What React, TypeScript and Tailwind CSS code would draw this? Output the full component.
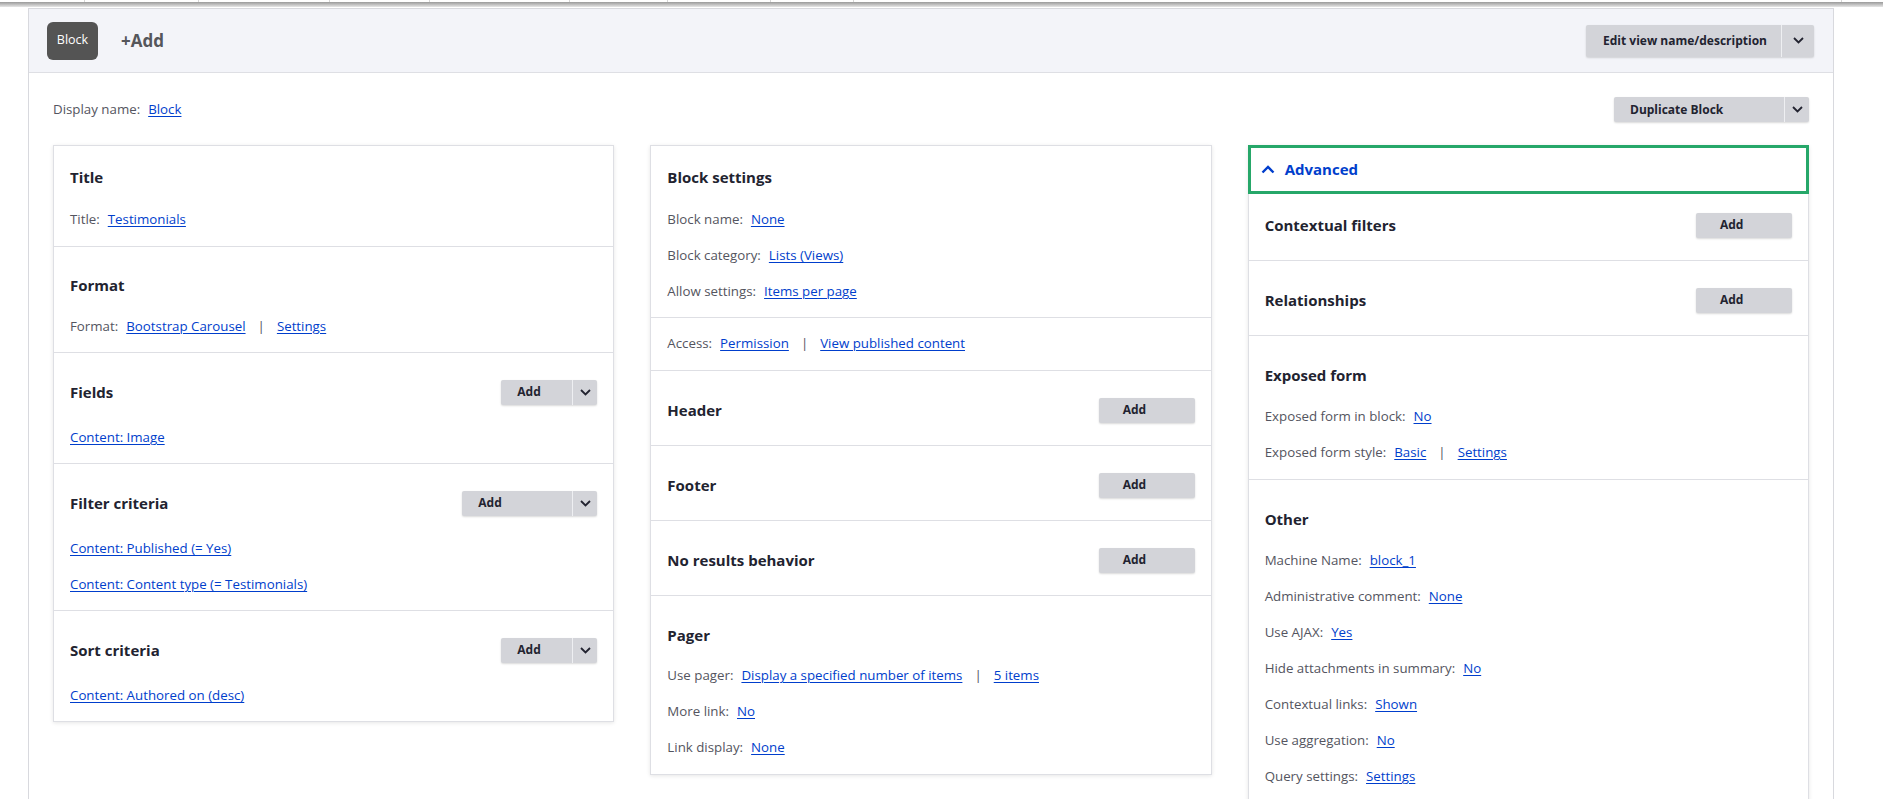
import React from 'react';

const LINK = 'text-[#003ecc] underline underline-offset-2 decoration-1';

const ChevronDown = () => (
  <svg width="11" height="7" viewBox="0 0 11 7" fill="none">
    <path d="M1 1l4.5 4.5L10 1" stroke="#222330" strokeWidth="1.8" />
  </svg>
);

const ChevronUp = () => (
  <svg width="14" height="9" viewBox="0 0 14 9" fill="none">
    <path d="M1.5 7.5L7 2l5.5 5.5" stroke="#003ecc" strokeWidth="2.4" />
  </svg>
);

type DropProps = { label: string; mainClass: string; toggle?: boolean };

const DropButton = ({ label, mainClass, toggle }: DropProps) => (
  <div className="flex h-[25px] items-stretch rounded-[2px] bg-[#d3d4d9] text-[12px] font-bold text-[#222330] shadow-[0_1px_2px_rgba(0,0,0,0.15)]">
    <span className={'flex items-center ' + mainClass}>{label}</span>
    {toggle && (
      <span className="flex w-[25px] items-center justify-center border-l border-[#eeeff2]">
        <ChevronDown />
      </span>
    )}
  </div>
);

type RowProps = { label?: string; links: string[] };

const Row = ({ label, links }: RowProps) => (
  <div className="flex h-[36px] items-center text-[13.3px] text-[#545560]">
    {label && <span className="mr-[8px]">{label}</span>}
    {links.map((link, idx) => (
      <React.Fragment key={idx}>
        {idx > 0 && <span className="mx-[12px]">|</span>}
        <a href="#" className={LINK}>
          {link}
        </a>
      </React.Fragment>
    ))}
  </div>
);

const Heading = ({ children }: { children: React.ReactNode }) => (
  <h3 className="text-[15px] font-bold text-[#222330]">{children}</h3>
);

const TopStrip = () => (
  <div>
    <div className="flex h-[2px]">
      <div className="w-[85px] border-r border-[#d6d6d6]" />
      <div className="w-[114px] border-r border-[#d6d6d6]" />
      <div className="w-[131px] border-r border-[#d6d6d6]" />
      <div className="w-[100px] border-r border-[#d6d6d6]" />
      <div className="w-[140px] border-r border-[#d6d6d6]" />
      <div className="w-[98px] border-r border-[#d6d6d6]" />
      <div className="w-[103px] border-r border-[#d6d6d6]" />
      <div className="w-[83px] border-r border-[#d6d6d6]" />
      <div className="w-[988px] border-r border-[#d6d6d6]" />
    </div>
    <div className="h-[5px] bg-linear-to-b from-[#9a9a9a] to-[#e6e6e6]" />
  </div>
);

export default function App() {
  return (
    <div className="min-h-screen bg-white font-['Open_Sans',sans-serif]">
      <TopStrip />
      <div className="mt-[1px] ml-[28px] w-[1806px] border border-[#d8d9de] bg-white pb-10">
        {/* display tabs */}
        <div className="flex h-[64px] items-center justify-between border-b border-[#dedfe4] bg-[#f3f4f9] pr-[19px] pl-[18px]">
          <div className="flex items-center">
            <button className="flex h-[38px] w-[51px] items-center justify-center rounded-[6px] bg-[#545454] text-[12.5px] text-white">
              Block
            </button>
            <span className="ml-[23px] text-[17px] font-bold text-[#55565b]">+Add</span>
          </div>
          <div className="flex h-[32px] items-stretch rounded-[2px] bg-[#d3d4d9] text-[12px] font-bold text-[#222330] shadow-[0_1px_2px_rgba(0,0,0,0.15)]">
            <span className="flex w-[195px] items-center pl-[17px]">Edit view name/description</span>
            <span className="flex w-[33px] items-center justify-center border-l border-[#eeeff2]">
              <ChevronDown />
            </span>
          </div>
        </div>

        <div className="px-[24px] pt-[24px]">
          <div className="flex h-[25px] items-center justify-between">
            <div className="text-[13.3px] text-[#545560]">
              <span className="mr-[8px]">Display name:</span>
              <a href="#" className={LINK}>
                Block
              </a>
            </div>
            <DropButton label="Duplicate Block" mainClass="w-[170px] pl-4" toggle />
          </div>

          <div className="mt-[23px] grid grid-cols-3 items-start gap-[36px]">
            {/* left column */}
            <div className="border border-[#dedfe4] bg-white shadow-[0_1px_4px_rgba(0,0,0,0.1)]">
              <div className="px-4 pt-[18px] pb-[8px]">
                <div className="flex h-[26px] items-center">
                  <Heading>Title</Heading>
                </div>
                <div className="mt-[12px]">
                  <Row label="Title:" links={['Testimonials']} />
                </div>
              </div>
              <div className="border-t border-[#dedfe4] px-4 pt-[25px] pb-[7px]">
                <div className="flex h-[26px] items-center">
                  <Heading>Format</Heading>
                </div>
                <div className="mt-[11px]">
                  <Row label="Format:" links={['Bootstrap Carousel', 'Settings']} />
                </div>
              </div>
              <div className="border-t border-[#dedfe4] px-4 pt-[26px] pb-[7px]">
                <div className="flex h-[26px] items-center justify-between">
                  <Heading>Fields</Heading>
                  <DropButton label="Add" mainClass="w-[71px] pl-4" toggle />
                </div>
                <div className="mt-[15px]">
                  <Row links={['Content: Image']} />
                </div>
              </div>
              <div className="border-t border-[#dedfe4] px-4 pt-[26px] pb-[7px]">
                <div className="flex h-[26px] items-center justify-between">
                  <Heading>Filter criteria</Heading>
                  <DropButton label="Add" mainClass="w-[110px] pl-4" toggle />
                </div>
                <div className="mt-[15px]">
                  <Row links={['Content: Published (= Yes)']} />
                  <Row links={['Content: Content type (= Testimonials)']} />
                </div>
              </div>
              <div className="border-t border-[#dedfe4] px-4 pt-[26px] pb-[7px]">
                <div className="flex h-[26px] items-center justify-between">
                  <Heading>Sort criteria</Heading>
                  <DropButton label="Add" mainClass="w-[71px] pl-4" toggle />
                </div>
                <div className="mt-[15px]">
                  <Row links={['Content: Authored on (desc)']} />
                </div>
              </div>
            </div>

            {/* middle column */}
            <div className="border border-[#dedfe4] bg-white shadow-[0_1px_4px_rgba(0,0,0,0.1)]">
              <div className="px-4 pt-[18px] pb-[7px]">
                <div className="flex h-[26px] items-center">
                  <Heading>Block settings</Heading>
                </div>
                <div className="mt-[12px]">
                  <Row label="Block name:" links={['None']} />
                  <Row label="Block category:" links={['Lists (Views)']} />
                  <Row label="Allow settings:" links={['Items per page']} />
                </div>
              </div>
              <div className="border-t border-[#dedfe4] px-4 pt-[8px] pb-[8px]">
                <Row label="Access:" links={['Permission', 'View published content']} />
              </div>
              <div className="border-t border-[#dedfe4] px-4 pt-[26px] pb-[22px]">
                <div className="flex h-[26px] items-center justify-between">
                  <Heading>Header</Heading>
                  <DropButton label="Add" mainClass="w-[96px] pl-6" />
                </div>
              </div>
              <div className="border-t border-[#dedfe4] px-4 pt-[26px] pb-[22px]">
                <div className="flex h-[26px] items-center justify-between">
                  <Heading>Footer</Heading>
                  <DropButton label="Add" mainClass="w-[96px] pl-6" />
                </div>
              </div>
              <div className="border-t border-[#dedfe4] px-4 pt-[26px] pb-[22px]">
                <div className="flex h-[26px] items-center justify-between">
                  <Heading>No results behavior</Heading>
                  <DropButton label="Add" mainClass="w-[96px] pl-6" />
                </div>
              </div>
              <div className="border-t border-[#dedfe4] px-4 pt-[26px] pb-[8px]">
                <div className="flex h-[26px] items-center">
                  <Heading>Pager</Heading>
                </div>
                <div className="mt-[10px]">
                  <Row label="Use pager:" links={['Display a specified number of items', '5 items']} />
                  <Row label="More link:" links={['No']} />
                  <Row label="Link display:" links={['None']} />
                </div>
              </div>
            </div>

            {/* right column */}
            <div className="bg-white shadow-[0_1px_4px_rgba(0,0,0,0.1)]">
              <div className="flex h-[49px] items-center border-[3px] border-[#26a769] pl-[10px]">
                <ChevronUp />
                <span className="ml-[10px] text-[15px] font-bold text-[#003ecc]">Advanced</span>
              </div>
              <div className="border-x border-b border-[#dedfe4]">
                <div className="px-4 pt-[18px] pb-[22px]">
                  <div className="flex h-[26px] items-center justify-between">
                    <Heading>Contextual filters</Heading>
                    <DropButton label="Add" mainClass="w-[96px] pl-6" />
                  </div>
                </div>
                <div className="border-t border-[#dedfe4] px-4 pt-[26px] pb-[22px]">
                  <div className="flex h-[26px] items-center justify-between">
                    <Heading>Relationships</Heading>
                    <DropButton label="Add" mainClass="w-[96px] pl-6" />
                  </div>
                </div>
                <div className="border-t border-[#dedfe4] px-4 pt-[26px] pb-[8px]">
                  <div className="flex h-[26px] items-center">
                    <Heading>Exposed form</Heading>
                  </div>
                  <div className="mt-[11px]">
                    <Row label="Exposed form in block:" links={['No']} />
                    <Row label="Exposed form style:" links={['Basic', 'Settings']} />
                  </div>
                </div>
                <div className="border-t border-[#dedfe4] px-4 pt-[26px] pb-[8px]">
                  <div className="flex h-[26px] items-center">
                    <Heading>Other</Heading>
                  </div>
                  <div className="mt-[11px]">
                    <Row label="Machine Name:" links={['block_1']} />
                    <Row label="Administrative comment:" links={['None']} />
                    <Row label="Use AJAX:" links={['Yes']} />
                    <Row label="Hide attachments in summary:" links={['No']} />
                    <Row label="Contextual links:" links={['Shown']} />
                    <Row label="Use aggregation:" links={['No']} />
                    <Row label="Query settings:" links={['Settings']} />
                  </div>
                </div>
              </div>
            </div>
          </div>
        </div>
      </div>
    </div>
  );
}
